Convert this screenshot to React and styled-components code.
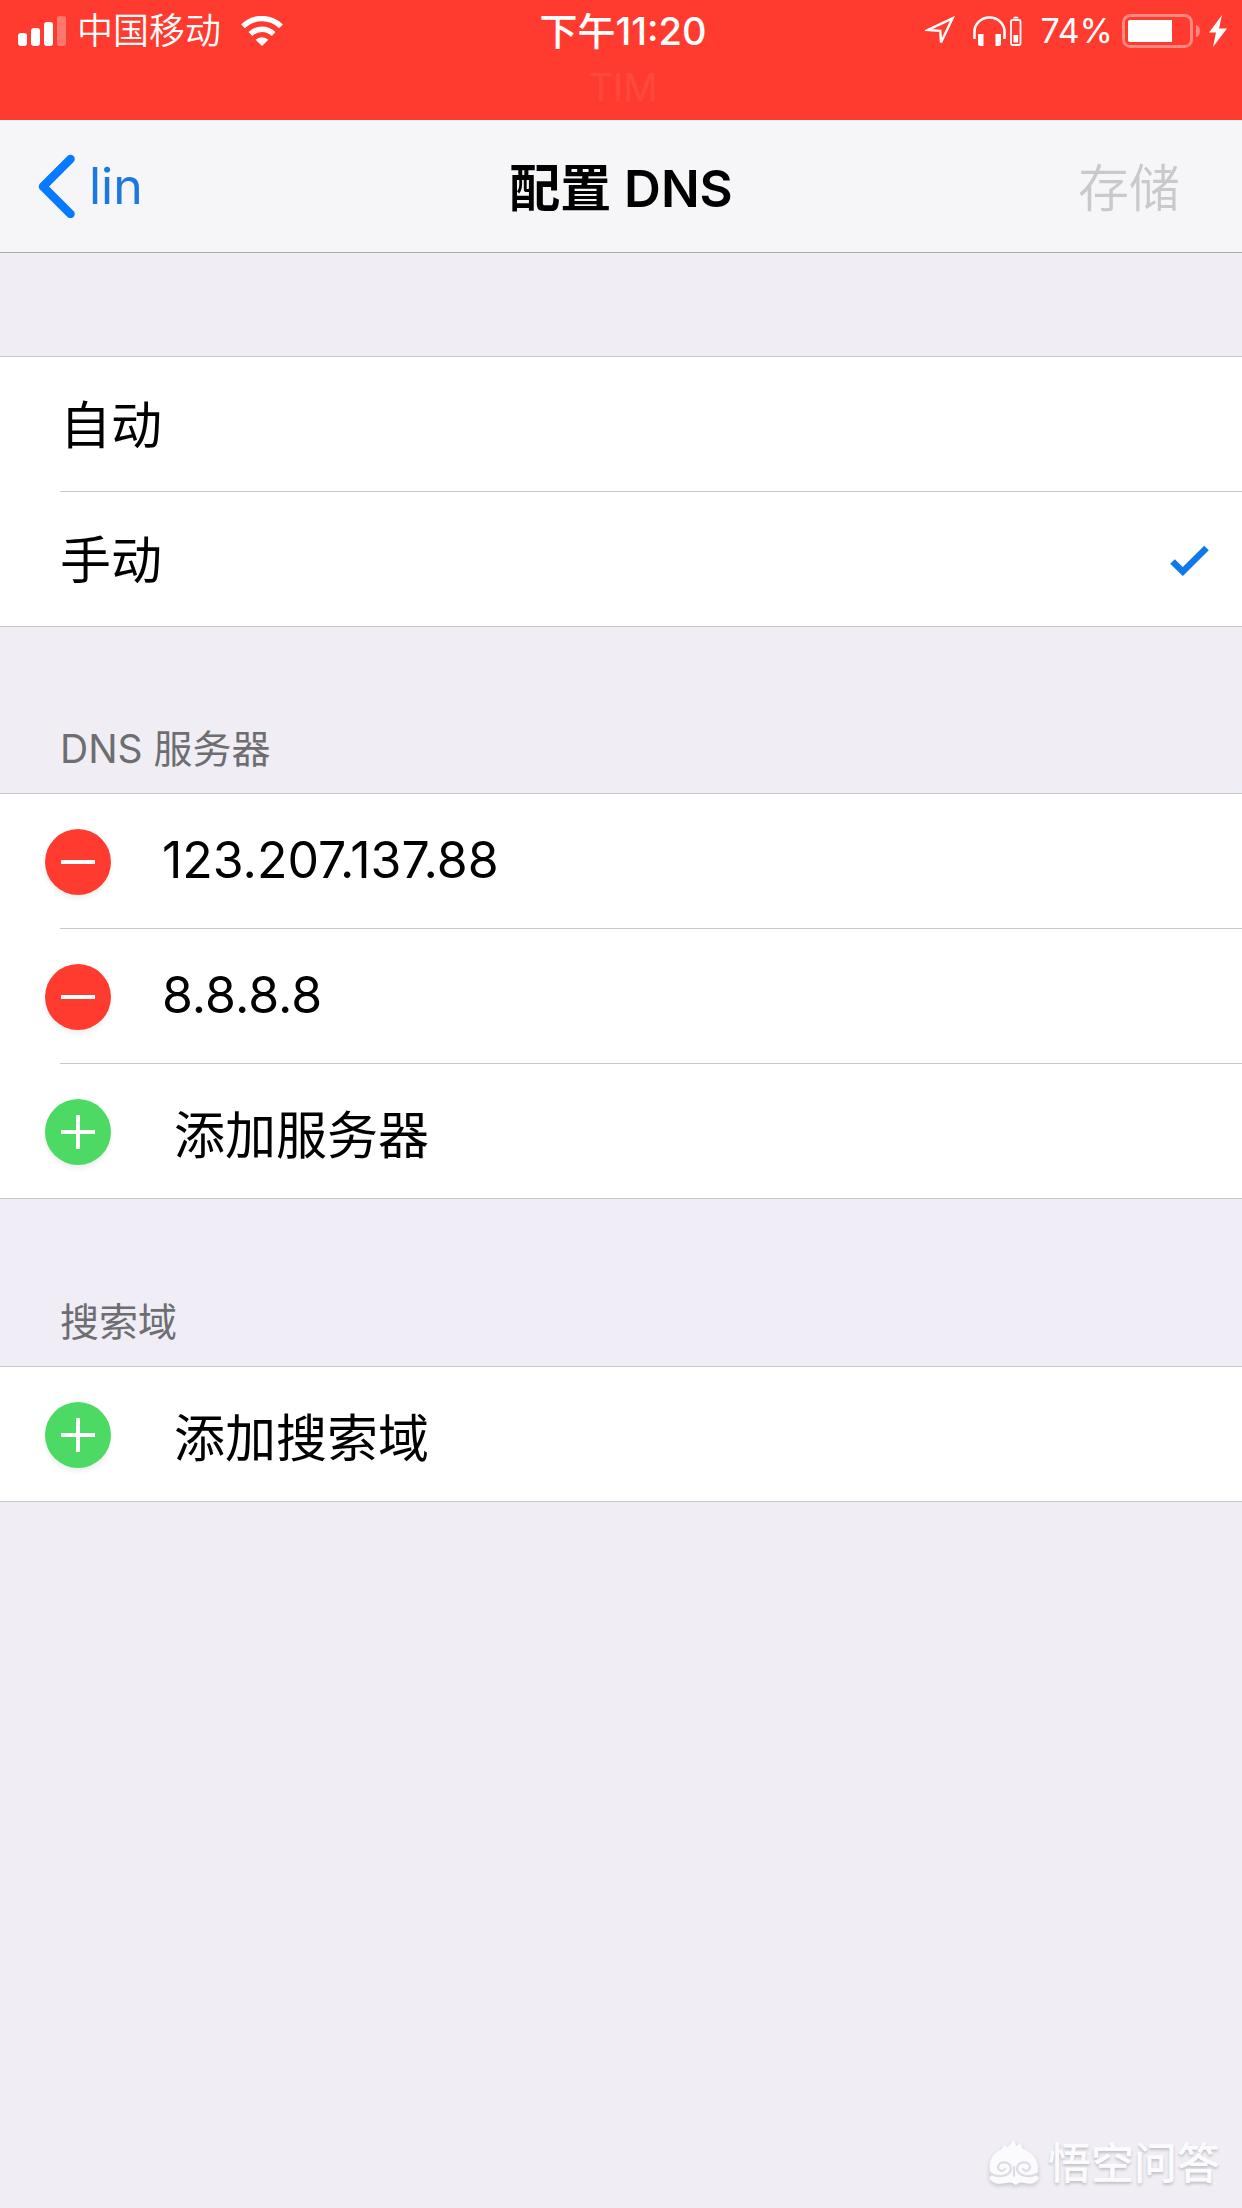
import React, { useState } from 'react'
import styled, { createGlobalStyle } from 'styled-components';

const GlobalStyle = createGlobalStyle`
    * {
        box-sizing: border-box;
    }

    body {
        margin: 0;
        background: #f0eef4;
        color: #000;
        font-family: Inter, "Noto Sans CJK SC", sans-serif;
        font-size: 51px;
    }

    button, input {
        font: inherit;
        color: inherit;
    }
`;

const Page = styled.div`
    display: flex;
    flex-direction: column;
    min-height: 100vh;
`;

const StatusBar = styled.header`
    display: grid;
    grid-template-columns: 1fr auto 1fr;
    align-items: start;
    height: 120px;
    padding: 8px 14px 0 18px;
    background: #ff3b30;
    color: #fff;
    font-size: 36px;
    line-height: 46px;
`;

const StatusGroup = styled.div`
    display: flex;
    align-items: center;
    justify-content: ${({ $end }) => ($end ? 'flex-end' : 'flex-start')};
    height: 46px;

    svg {
        display: block;
        flex: none;
    }
`;

const Carrier = styled.span`
    margin: 0 20px 0 10px;
    font-weight: 350;
`;

const Devices = styled.div`
    display: flex;
    gap: 18px;
`;

const Percent = styled.span`
    margin: 0 9px 0 18px;
    font-size: 34px;
`;

const StatusCenter = styled.div`
    text-align: center;
    font-size: 38px;
    font-weight: 500;
`;

const AppName = styled.div`
    margin-top: 10px;
    color: #ff493c;
    font-size: 38px;
    font-weight: 400;
`;

const NavBar = styled.nav`
    display: grid;
    grid-template-columns: 1fr auto 1fr;
    align-items: center;
    height: 133px;
    padding: 0 38px 3px;
    background: #f6f6f8;
    border-bottom: 1px solid #a9a9ac;
`;

const BackLink = styled.a`
    display: flex;
    align-items: center;
    gap: 14px;
    padding-top: 2px;
    color: #1a78e0;
    font-size: 50px;
    text-decoration: none;
`;

const Title = styled.h1`
    margin: 0;
    font-size: 51px;
    font-weight: 600;
`;

const SaveButton = styled.button`
    justify-self: end;
    padding: 0 24px 0 0;
    border: none;
    background: none;
    font-weight: 350;

    &:disabled {
        color: #c9c9cb;
    }
`;

const Section = styled.section`
    background: ${({ $tinted }) => ($tinted ? '#f0edf7' : 'transparent')};
`;

const SectionHeading = styled.h2`
    display: flex;
    align-items: flex-end;
    height: ${({ $tall }) => ($tall ? '167px' : '166px')};
    margin: 0;
    padding: 0 60px 16px;
    color: #6d6d72;
    font-size: 39px;
    font-weight: 400;
    line-height: 56px;
`;

const List = styled.ul`
    margin: ${({ $spaced }) => ($spaced ? '103px 0 0' : '0')};
    padding: 0;
    list-style: none;
    background: #fff;
    border-top: 1px solid #c8c7cc;
    border-bottom: 1px solid #c8c7cc;
`;

const Item = styled.li`
    & + &::before {
        content: '';
        display: block;
        height: 1px;
        margin-left: 60px;
        background: #c8c7cc;
    }
`;

const Choice = styled.label`
    display: flex;
    align-items: center;
    justify-content: space-between;
    height: 134px;
    padding: 2px 33px 0 60px;

    svg {
        visibility: hidden;
    }

    input:checked + svg {
        visibility: visible;
    }
`;

const ChoiceText = styled.span`
    flex: 1;
    padding-bottom: 6px;
`;

const Radio = styled.input`
    appearance: none;
    width: 0;
    height: 0;
    margin: 0;
`;

const Row = styled.div`
    display: flex;
    align-items: center;
    gap: 51px;
    height: 134px;
    padding: 2px 0 0 45px;
`;

const RoundButton = styled.button`
    display: block;
    flex: none;
    width: 66px;
    height: 66px;
    padding: 0;
    border: none;
    border-radius: 50%;
    background: #ff3b30;
    box-shadow: 0 4px 4px rgba(0, 0, 0, 0.06);
`;

const AddButton = styled.button`
    display: flex;
    align-items: center;
    gap: 63px;
    width: 100%;
    height: 134px;
    padding: 2px 0 0 45px;
    border: none;
    background: none;
    text-align: left;
`;

const AddIcon = styled.span`
    display: block;
    width: 66px;
    height: 66px;
    border-radius: 50%;
    background: #4cd964;
    box-shadow: 0 4px 4px rgba(0, 0, 0, 0.06);
`;

const AddressInput = styled.input`
    flex: 1;
    min-width: 0;
    padding: 0 0 4px;
    border: none;
    outline: none;
    background: none;
    font-size: 50px;
`;

const Watermark = styled.footer`
    display: flex;
    align-items: center;
    justify-content: flex-end;
    gap: 9px;
    margin-top: auto;
    padding: 0 22px 13px;
    color: #fbfbfd;
    font-size: 43px;
    font-weight: 500;
    line-height: 64px;
    text-shadow: 0 2px 3px rgba(0, 0, 0, 0.2);

    svg {
        filter: drop-shadow(0 2px 2px rgba(0, 0, 0, 0.18));
    }
`;

const SignalIcon = () => (
    <svg width="49" height="30" viewBox="0 0 49 30" fill="#fff">
        <rect x="0" y="17" width="9" height="13" rx="3" />
        <rect x="13" y="12" width="9" height="18" rx="3" />
        <rect x="26" y="6" width="9" height="24" rx="3" />
        <rect x="39" y="0" width="9" height="30" rx="3" opacity="0.3" />
    </svg>
);

const WifiIcon = () => (
    <svg width="42" height="30" viewBox="0 0 42 30" fill="none" stroke="#fff" strokeWidth="5.400">
        <path d="M2 10.400a26.900 26.900 0 0 1 38 0" />
        <path d="M9.400 18a16.400 16.400 0 0 1 23.200 0" />
        <path d="M21 30l-6.400-6.200a9 9 0 0 1 12.800 0z" fill="#fff" stroke="none" />
    </svg>
);

const LocationIcon = () => (
    <svg width="30" height="30" viewBox="0 0 30 30" fill="none" stroke="#fff" strokeWidth="2.400">
        <path d="M27.500 2.300L3 14l12.300 .8L16 26.500z" />
    </svg>
);

const HeadphonesIcon = () => (
    <svg width="49" height="30" viewBox="0 0 49 30" fill="none" stroke="#fff">
        <path d="M1.500 23V15.500a15 14 0 0 1 30 0V23" strokeWidth="2.600" />
        <path d="M5 18h5.500v12h-3a2.500 2.500 0 0 1-2.500-2.500zM28 18h-5.500v12h3a2.500 2.500 0 0 0 2.500-2.500z" fill="#fff" stroke="none" />
        <rect x="38" y="4" width="9.500" height="25" rx="1.500" strokeWidth="1.800" />
        <rect x="40.500" y="19" width="4.600" height="7.500" fill="#fff" stroke="none" />
        <path d="M40 2.500q0-2 2.800-2t2.800 2z" fill="#fff" stroke="none" />
    </svg>
);

const BatteryIcon = () => (
    <svg width="78" height="34" viewBox="0 0 78 34">
        <rect x="1.500" y="1.500" width="68" height="31" rx="7" fill="none" stroke="#fff" strokeWidth="3" opacity="0.4" />
        <path d="M8 6h42v22H8a2 2 0 0 1-2-2V8a2 2 0 0 1 2-2z" fill="#fff" />
        <path d="M74 11q4 1 4 6t-4 6z" fill="#fff" opacity="0.4" />
    </svg>
);

const BoltIcon = () => (
    <svg width="28" height="32" viewBox="0 0 28 32">
        <path d="M22 0L9 17.500h7L13 32l14-18.500h-8z" fill="#fff" />
    </svg>
);

const ChevronIcon = () => (
    <svg width="37" height="64" viewBox="0 0 37 64" fill="none" stroke="#077aff" strokeWidth="8.500" strokeLinecap="round" strokeLinejoin="round">
        <path d="M32.500 5L5 32.500L32.500 60" />
    </svg>
);

const CheckIcon = () => (
    <svg width="39" height="32" viewBox="0 0 39 32" fill="none" stroke="#0f78ea" strokeWidth="6.500">
        <path d="M2.500 17.500L12.800 27.500L36.500 4" />
    </svg>
);

const MinusIcon = () => (
    <svg width="66" height="66" viewBox="0 0 66 66" stroke="#fff" strokeWidth="4">
        <path d="M16 33H50" />
    </svg>
);

const PlusIcon = () => (
    <svg width="66" height="66" viewBox="0 0 66 66" stroke="#fff" strokeWidth="4">
        <path d="M16 33H50M33 16V50" />
    </svg>
);

const MonkeyIcon = () => (
    <svg width="50" height="46" viewBox="0 0 50 46">
        <path
            d="M1 31C-1 20 5 12 13 9l2-4 3 2c2-1 4-3 6-7 2 2 3 4 3 6l5-3c0 3 1 4 2 6 9 3 16 11 15 22l-2 4 3 3c-3 5-8 7-14 5-4-1-6-1-9 2-4-3-6-3-10-2C9 45 3 43 0 38l3-3z"
            fill="#fbfbfd"
        />
        <path
            d="M1 33c6 5 20 4 21-4 0-8-12-9-13-2 0 4 5 5 7 2M49 33c-6 5-20 4-21-4 0-8 12-9 13-2 0 4-5 5-7 2M25 27v9"
            fill="none"
            stroke="#dddce2"
            strokeWidth="2.200"
            strokeLinecap="round"
        />
    </svg>
);

const modes = ['自动', '手动'];

const App = () => {
    const [mode, setMode] = useState('手动');
    const [servers, setServers] = useState(['123.207.137.88', '8.8.8.8']);

    const changeServer = (index, value) => {
        setServers(servers.map((server, i) => (i === index ? value : server)));
    };

    const removeServer = index => {
        setServers(servers.filter((server, i) => i !== index));
    };

    return (
        <Page>
            <GlobalStyle />
            <StatusBar>
                <StatusGroup>
                    <SignalIcon />
                    <Carrier>中国移动</Carrier>
                    <WifiIcon />
                </StatusGroup>
                <StatusCenter>
                    下午11:20
                    <AppName>TIM</AppName>
                </StatusCenter>
                <StatusGroup $end>
                    <Devices>
                        <LocationIcon />
                        <HeadphonesIcon />
                    </Devices>
                    <Percent>74%</Percent>
                    <BatteryIcon />
                    <BoltIcon />
                </StatusGroup>
            </StatusBar>
            <NavBar>
                <BackLink href="#back">
                    <ChevronIcon />
                    lin
                </BackLink>
                <Title>配置 DNS</Title>
                <SaveButton disabled>存储</SaveButton>
            </NavBar>
            <main>
                <List $spaced>
                    {
                        modes.map(name => (
                            <Item key={name}>
                                <Choice>
                                    <ChoiceText>{name}</ChoiceText>
                                    <Radio
                                        type="radio"
                                        name="mode"
                                        checked={mode === name}
                                        onChange={() => setMode(name)}
                                    />
                                    <CheckIcon />
                                </Choice>
                            </Item>
                        ))
                    }
                </List>
                <Section>
                    <SectionHeading id="servers">DNS 服务器</SectionHeading>
                    <List>
                        {
                            servers.map((server, i) => (
                                <Item key={i}>
                                    <Row>
                                        <RoundButton aria-label="删除" onClick={() => removeServer(i)}>
                                            <MinusIcon />
                                        </RoundButton>
                                        <AddressInput
                                            aria-labelledby="servers"
                                            value={server}
                                            onChange={e => changeServer(i, e.target.value)}
                                        />
                                    </Row>
                                </Item>
                            ))
                        }
                        <Item>
                            <AddButton onClick={() => setServers([...servers, ''])}>
                                <AddIcon><PlusIcon /></AddIcon>
                                添加服务器
                            </AddButton>
                        </Item>
                    </List>
                </Section>
                <Section $tinted>
                    <SectionHeading $tall>搜索域</SectionHeading>
                    <List>
                        <Item>
                            <AddButton>
                                <AddIcon><PlusIcon /></AddIcon>
                                添加搜索域
                            </AddButton>
                        </Item>
                    </List>
                </Section>
            </main>
            <Watermark>
                <MonkeyIcon />
                悟空问答
            </Watermark>
        </Page>
    )
}

export default App
